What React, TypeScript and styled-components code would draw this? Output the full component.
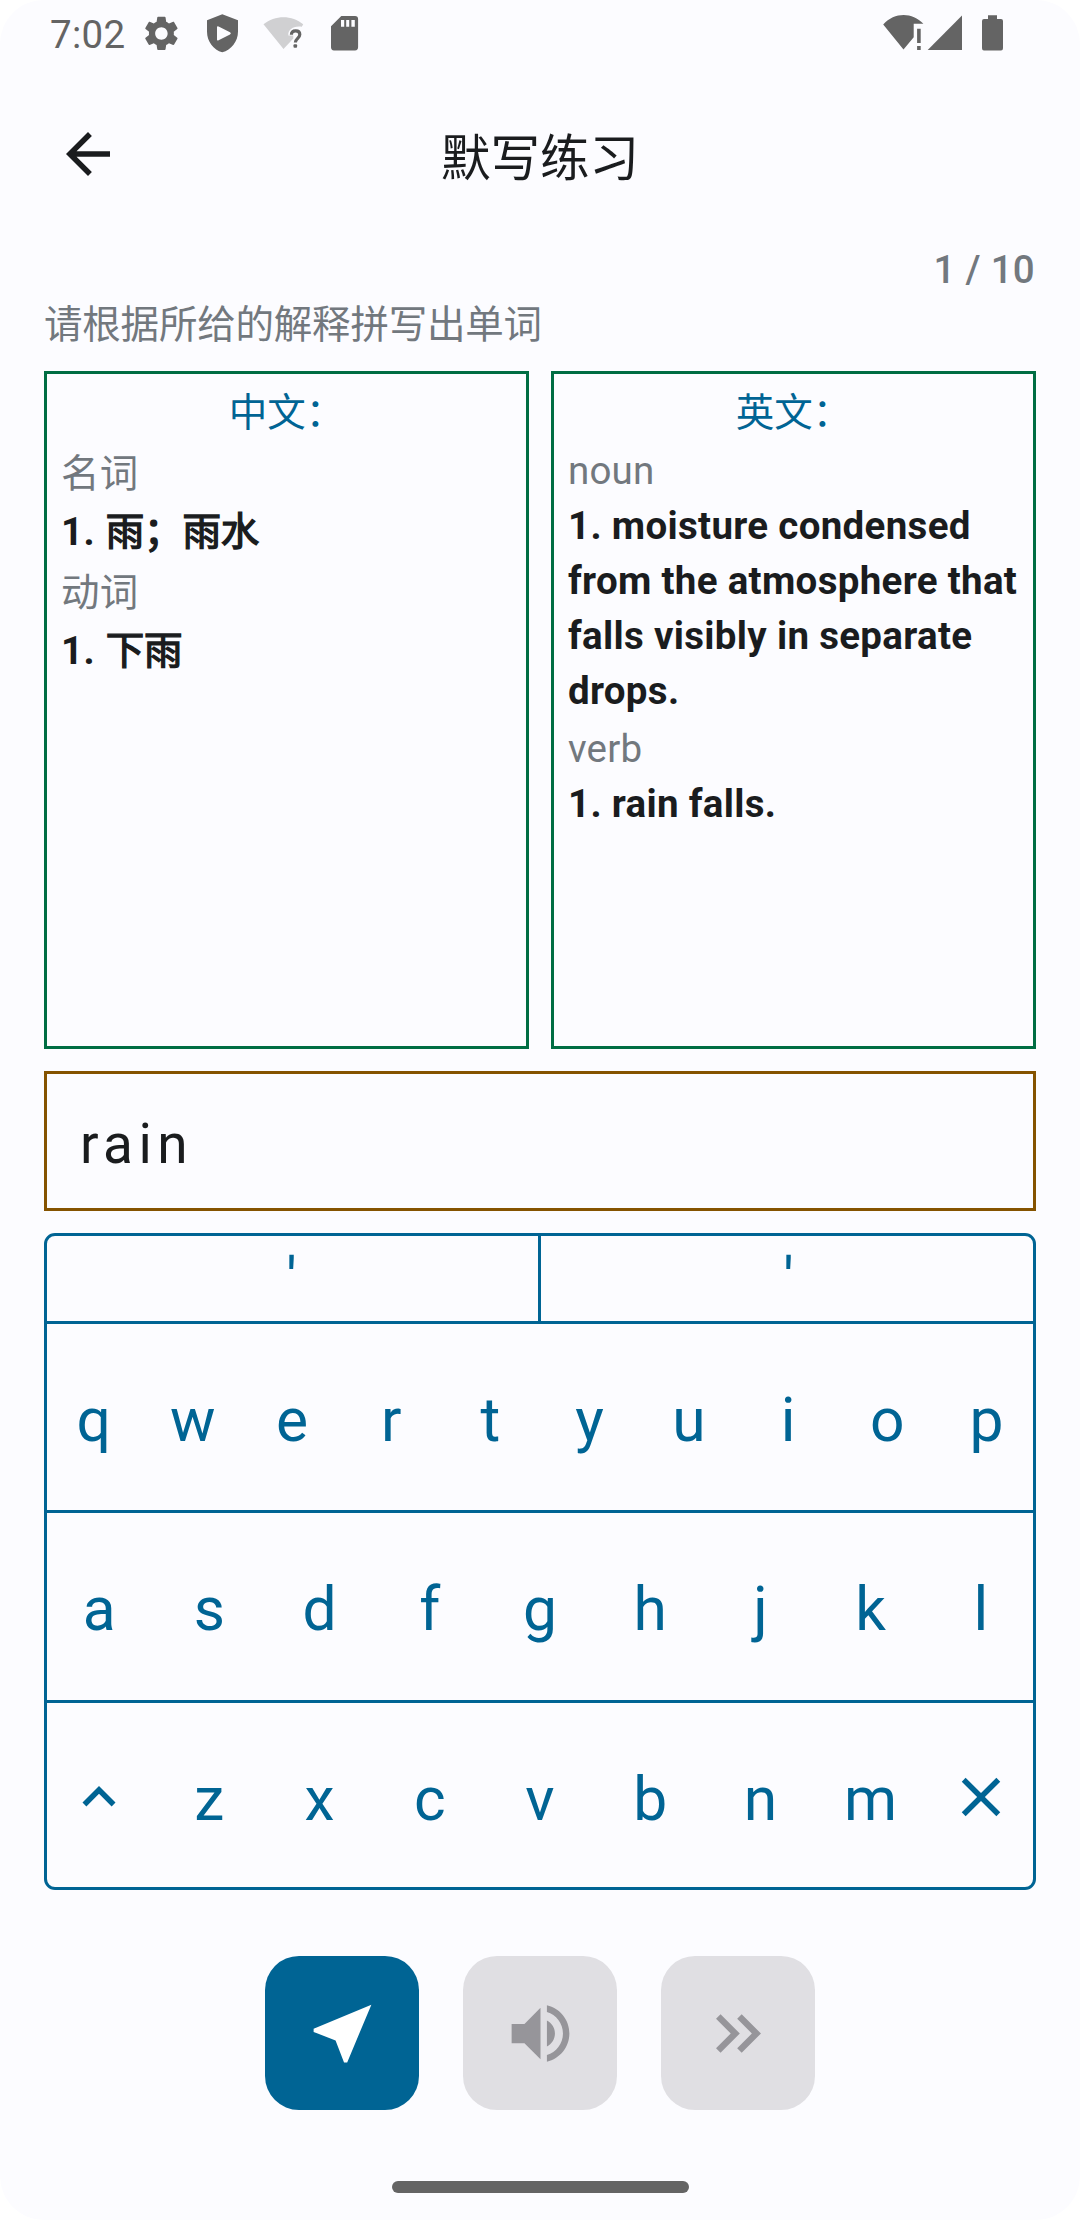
import React from "react";
import styled, { createGlobalStyle } from "styled-components";

const color = {
  surface: "#fcfcff",
  text: "#1a1c1e",
  muted: "#72787e",
  primary: "#006494",
  green: "#006d43",
  brown: "#855300",
  status: "#646464",
  disabled: "#e0dfe3",
  disabledIcon: "#96959a",
};

const GlobalStyle = createGlobalStyle`
  body { margin: 0; background: #fff; }
  * { box-sizing: border-box; }
  button { font: inherit; color: inherit; background: none; border: 0; padding: 0; margin: 0; }
`;

const Screen = styled.div`
  width: 1080px;
  height: 2220px;
  display: flex;
  flex-direction: column;
  overflow: hidden;
  border-radius: 44px;
  background: ${color.surface};
  color: ${color.text};
  font-family: Roboto, "Noto Sans CJK SC", sans-serif;
`;

const StatusBar = styled.div`
  height: 66px;
  padding: 0 77px 0 50px;
  display: flex;
  justify-content: space-between;
  color: ${color.status};
`;

const StatusGroup = styled.div`
  display: flex;
  align-items: flex-start;
`;

const Clock = styled.span`
  width: 88px;
  padding-top: 12px;
  font-size: 38.5px;
  letter-spacing: 0.3px;
  line-height: 45px;
`;

const StatusIcon = styled.svg<{ $w: number; $gap?: number }>`
  display: block;
  width: ${(p) => p.$w}px;
  height: 66px;
  margin-left: ${(p) => p.$gap ?? 0}px;
  fill: currentColor;
`;

const AppBar = styled.header`
  height: 176px;
  padding: 0 55px;
  display: grid;
  grid-template-columns: 66px 1fr 66px;
  align-items: center;
`;

const BackButton = styled.button`
  display: flex;
`;

const Title = styled.h1`
  margin: 9px 0 0;
  font-size: 49.5px;
  font-weight: 400;
  line-height: 72px;
  text-align: center;
`;

const Icon = styled.svg<{ $size: number }>`
  display: block;
  width: ${(p) => p.$size}px;
  height: ${(p) => p.$size}px;
  fill: currentColor;
`;

const Content = styled.main`
  padding: 0 44px;
  display: flex;
  flex-direction: column;
`;

const Progress = styled.div`
  height: 55px;
  padding-right: 1px;
  font-size: 38.5px;
  font-weight: 500;
  letter-spacing: 0.3px;
  line-height: 55px;
  text-align: right;
  color: ${color.muted};
`;

const Hint = styled.p`
  height: 74px;
  margin: 0;
  font-size: 38.5px;
  letter-spacing: -0.2px;
  line-height: 55px;
  color: ${color.muted};
`;

const Definitions = styled.section`
  height: 678px;
  display: grid;
  grid-template-columns: 1fr 1fr;
  column-gap: 22px;
`;

const Card = styled.article`
  padding: 10px 0 0 14px;
  border: 3px solid ${color.green};
`;

const CardTitle = styled.h2<{ $height: number }>`
  height: ${(p) => p.$height}px;
  margin: 0 14px 0 0;
  font-size: 38.5px;
  font-weight: 400;
  line-height: 58px;
  text-align: center;
  color: ${color.primary};
`;

const PartOfSpeech = styled.div<{ $line: number }>`
  margin-top: 3px;
  font-size: 38.5px;
  letter-spacing: 0.2px;
  line-height: ${(p) => p.$line}px;
  color: ${color.muted};
`;

const Meaning = styled.div<{ $line: number }>`
  font-size: 38.5px;
  font-weight: 700;
  letter-spacing: 0.31px;
  line-height: ${(p) => p.$line}px;
`;

/* Han text is emboldened from the regular weight by an outline. */
const Han = styled.span`
  margin-left: 1px;
  font-weight: 400;
  letter-spacing: -0.15px;
  -webkit-text-stroke: 1.4px currentColor;
`;

const Answer = styled.div`
  height: 140px;
  margin-top: 22px;
  padding: 6px 32px 0 33px;
  display: flex;
  align-items: center;
  border: 3px solid ${color.brown};
  font-size: 55px;
  letter-spacing: 5.5px;
`;

const Keyboard = styled.section`
  height: 657px;
  margin-top: 22px;
  display: flex;
  flex-direction: column;
  border: 3px solid ${color.primary};
  border-radius: 11px;
  color: ${color.primary};
  font-size: 60.5px;
`;

const KeyRow = styled.div<{ $height: number }>`
  height: ${(p) => p.$height}px;
  margin: 0 -3px;
  display: flex;
  border-bottom: 3px solid ${color.primary};
  &:last-child {
    border-bottom: 0;
  }
`;

const Key = styled.button<{ $drop?: number }>`
  flex: 1 1 0;
  min-width: 0;
  display: flex;
  align-items: center;
  justify-content: center;
  padding-top: ${(p) => p.$drop ?? 0}px;
`;

const WideKey = styled(Key)`
  & + & {
    margin-left: -1px;
    border-left: 3px solid ${color.primary};
  }
`;

const Actions = styled.div`
  margin-top: 66px;
  display: flex;
  justify-content: center;
  gap: 44px;
`;

const ActionButton = styled.button<{ $active?: boolean }>`
  width: 154px;
  height: 154px;
  display: flex;
  align-items: center;
  justify-content: center;
  border-radius: 34px;
  background: ${(p) => (p.$active ? color.primary : color.disabled)};
  color: ${(p) => (p.$active ? "#fff" : color.disabledIcon)};
`;

const HomeIndicator = styled.div`
  width: 297px;
  height: 12px;
  margin: 71px auto 0;
  border-radius: 6px;
  background: ${color.status};
`;

const Glyph = ({ size, d }: { size: number; d: string }) => (
  <Icon $size={size} viewBox="0 0 24 24">
    <path d={d} />
  </Icon>
);

const paths = {
  back: "M20 11H7.83l5.59-5.59L12 4l-8 8 8 8 1.41-1.41L7.83 13H20v-2z",
  shift: "M12 8l-6 6 1.41 1.41L12 10.83l4.59 4.58L18 14z",
  close: "M19 6.41L17.59 5 12 10.59 6.41 5 5 6.41 10.59 12 5 17.59 6.41 19 12 13.41 17.59 19 19 17.59 13.41 12z",
  send: "M21 3L3 10.53v.98l6.84 2.65L12.48 21h.98L21 3z",
  volume:
    "M3 9v6h4l5 5V4L7 9H3zm13.5 3c0-1.77-1.02-3.29-2.5-4.03v8.05c1.48-.73 2.5-2.25 2.5-4.02zM14 3.23v2.06c2.89.86 5 3.54 5 6.71s-2.11 5.85-5 6.71v2.06c4.01-.91 7-4.49 7-8.77s-2.99-7.86-7-8.77z",
  skip: "M6.41 6 5 7.41 9.58 12 5 16.59 6.41 18l6-6zM13 6l-1.41 1.41L16.17 12l-4.58 4.59L13 18l6-6z",
};

const Status = () => (
  <StatusBar>
    <StatusGroup>
      <Clock>7:02</Clock>
      <StatusIcon $w={46} viewBox="138 0 46 66">
        <path
          transform="translate(140.6 12.6) scale(1.733)"
          d="M19.14 12.94c.04-.3.06-.61.06-.94 0-.32-.02-.64-.07-.94l2.03-1.58c.18-.14.23-.41.12-.61l-1.92-3.32c-.12-.22-.37-.29-.59-.22l-2.39.96c-.5-.38-1.03-.7-1.62-.94l-.36-2.54c-.04-.24-.24-.41-.48-.41h-3.84c-.24 0-.43.17-.47.41l-.36 2.54c-.59.24-1.13.57-1.62.94l-2.39-.96c-.22-.08-.47 0-.59.22L2.74 8.87c-.12.21-.08.47.12.61l2.03 1.58c-.05.3-.09.63-.09.94s.02.64.07.94l-2.03 1.58c-.18.14-.23.41-.12.61l1.92 3.32c.12.22.37.29.59.22l2.39-.96c.5.38 1.03.7 1.62.94l.36 2.54c.05.24.24.41.48.41h3.84c.24 0 .44-.17.47-.41l.36-2.54c.59-.24 1.13-.56 1.62-.94l2.39.96c.22.08.47 0 .59-.22l1.92-3.32c.12-.22.07-.47-.12-.61l-2.01-1.58zM12 15.6c-1.98 0-3.6-1.62-3.6-3.6s1.62-3.6 3.6-3.6 3.6 1.62 3.6 3.6-1.62 3.6-3.6 3.6z"
        />
      </StatusIcon>
      <StatusIcon $w={40} $gap={18} viewBox="202 0 40 66">
        <path
          fillRule="evenodd"
          d="M222.3 14.3 238 20.2V31.5C238 41.5 231.3 50 222.3 52.3 213.5 50 207 41.5 207 31.5V20.2ZM217 27.2V39.6Q217 41.2 218.6 40.3L230 34.4Q231.8 33.3 230 32.3L218.6 26.4Q217 25.7 217 27.2Z"
        />
      </StatusIcon>
      <StatusIcon $w={44} $gap={18} viewBox="260 0 44 66">
        <path opacity="0.29" d="M263.5 24.3C275 14.8 292 14.8 303.2 24.3L301.8 26.8C293 25.6 287.6 30 288.4 35.6H293.3V38.5L283.5 48.9Z" />
        <path
          d="M291.4 34.8C291.4 32.2 293.2 30.8 295.7 30.8C298.3 30.8 299.8 32.3 299.8 34.6C299.8 38.2 295.4 38.6 295.4 42.6"
          fill="none"
          stroke="currentColor"
          strokeWidth="3.2"
        />
        <rect x="293.5" y="44.3" width="3.6" height="3.5" rx="1" />
      </StatusIcon>
      <StatusIcon $w={32} $gap={24} viewBox="328 0 32 66">
        <path
          fillRule="evenodd"
          d="M341.3 16H355Q358.1 16 358.1 19V47.3Q358.1 50.4 355 50.4H334Q331 50.4 331 47.3V26.3ZM341 20V26.7H344.2V20ZM346.2 20V26.7H349.2V20ZM351.4 20V26.7H354.8V20Z"
        />
      </StatusIcon>
    </StatusGroup>
    <StatusGroup>
      <StatusIcon $w={42} viewBox="882 0 42 66">
        <path d="M883.2 24.5C894.5 12.2 912 12 923.4 23.8H913.7V37.2L903.5 49.6Z" />
        <path d="M917.1 28.8H920.7V43H917.1ZM917.1 46.1H920.7V50H917.1Z" />
      </StatusIcon>
      <StatusIcon $w={36} $gap={3} viewBox="927 0 36 66">
        <path d="M927.7 49.9 962 15.6V49.9Z" />
      </StatusIcon>
      <StatusIcon $w={22} $gap={18} viewBox="981 0 22 66">
        <path d="M988 15.2H997V19H1001Q1003 19 1003 21V48.3Q1003 50.5 1001 50.5H984Q982 50.5 982 48.3V21Q982 19 984 19H988Z" />
      </StatusIcon>
    </StatusGroup>
  </StatusBar>
);

const Letters = ({ letters, drop }: { letters: string; drop: number }) => (
  <>
    {letters.split("").map((c) => (
      <Key key={c} $drop={drop}>
        {c}
      </Key>
    ))}
  </>
);

export default function App() {
  return (
    <>
      <GlobalStyle />
      <Screen>
        <Status />
        <AppBar>
          <BackButton aria-label="back">
            <Glyph size={66} d={paths.back} />
          </BackButton>
          <Title>默写练习</Title>
        </AppBar>
        <Content>
          <Progress>1 / 10</Progress>
          <Hint>请根据所给的解释拼写出单词</Hint>
          <Definitions>
            <Card lang="zh-CN">
              <CardTitle $height={58}>中文：</CardTitle>
              <PartOfSpeech $line={58}>名词</PartOfSpeech>
              <Meaning $line={58}>
                1. <Han>雨；雨水</Han>
              </Meaning>
              <PartOfSpeech $line={58}>动词</PartOfSpeech>
              <Meaning $line={58}>
                1. <Han>下雨</Han>
              </Meaning>
            </Card>
            <Card>
              <CardTitle $height={56} lang="zh-CN">
                英文：
              </CardTitle>
              <PartOfSpeech $line={55}>noun</PartOfSpeech>
              <Meaning $line={55}>1. moisture condensed from the atmosphere that falls visibly in separate drops.</Meaning>
              <PartOfSpeech $line={55}>verb</PartOfSpeech>
              <Meaning $line={55}>1. rain falls.</Meaning>
            </Card>
          </Definitions>
          <Answer>rain</Answer>
          <Keyboard>
            <KeyRow $height={88}>
              <WideKey $drop={4}>'</WideKey>
              <WideKey $drop={4}>'</WideKey>
            </KeyRow>
            <KeyRow $height={189}>
              <Letters letters="qwertyuiop" drop={6} />
            </KeyRow>
            <KeyRow $height={190}>
              <Letters letters="asdfghjkl" drop={5} />
            </KeyRow>
            <KeyRow $height={184}>
              <Key $drop={4} aria-label="shift">
                <Glyph size={66} d={paths.shift} />
              </Key>
              <Letters letters="zxcvbnm" drop={8} />
              <Key $drop={4} aria-label="delete">
                <Glyph size={66} d={paths.close} />
              </Key>
            </KeyRow>
          </Keyboard>
          <Actions>
            <ActionButton $active aria-label="submit">
              <Glyph size={77} d={paths.send} />
            </ActionButton>
            <ActionButton aria-label="speak">
              <Glyph size={77} d={paths.volume} />
            </ActionButton>
            <ActionButton aria-label="next">
              <Glyph size={77} d={paths.skip} />
            </ActionButton>
          </Actions>
        </Content>
        <HomeIndicator />
      </Screen>
    </>
  );
}
